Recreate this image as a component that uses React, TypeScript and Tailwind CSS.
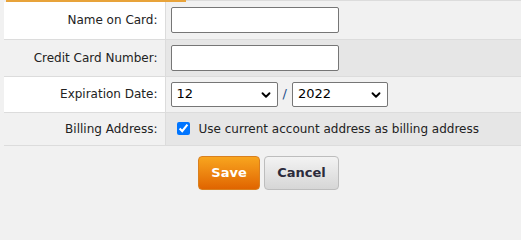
import { ChevronDown } from 'lucide-react';

const rows = [
  { label: 'Name on Card:', kind: 'text' },
  { label: 'Credit Card Number:', kind: 'text' },
  { label: 'Expiration Date:', kind: 'date' },
  { label: 'Billing Address:', kind: 'check' },
];

const Select = ({ value, width }: { value: string; width: string }) => (
  <div className={`relative ${width} h-[25px]`}>
    <select
      defaultValue={value}
      className="w-full h-full appearance-none bg-white border border-[#767676] rounded-[2px] pl-[5px] text-[13px] text-black outline-none"
    >
      <option>{value}</option>
    </select>
    <ChevronDown
      size={14}
      strokeWidth={3.2}
      className="absolute right-[5px] top-[6px] text-black pointer-events-none"
    />
  </div>
);

export default function App() {
  return (
    <div className="w-[521px] min-h-screen bg-[#f1f1f1] overflow-hidden font-['DejaVu_Sans',Verdana,sans-serif] text-[12px] text-[#222]">
      <div className="flex h-[2px]">
        <div className="w-[6px]" />
        <div className="w-[180px] bg-[#e8a33a]" />
        <div className="flex-1 border-t border-[#dcdcdc]" />
      </div>
      <table className="ml-[4px] w-[517px] border-collapse">
        <tbody>
          {rows.map((row, i) => {
            const odd = i % 2 === 1;
            return (
              <tr
                key={row.label}
                className={`border-b border-[#dcdcdc] ${row.kind === 'check' ? 'h-[33px]' : row.kind === 'date' ? 'h-[36px]' : 'h-[37px]'}`}
              >
                <td className={`w-[161px] pr-[7px] text-right align-middle border-r border-[#dcdcdc] ${odd ? 'bg-[#f1f1f1]' : 'bg-white'}`}>
                  {row.label}
                </td>
                <td className={`pl-[5px] align-middle ${odd ? 'bg-[#e6e6e6]' : 'bg-[#f1f1f1]'}`}>
                  {row.kind === 'text' && (
                    <input
                      type="text"
                      className="block w-[168px] h-[26px] bg-white border border-[#767676] rounded-[2px] outline-none"
                    />
                  )}
                  {row.kind === 'date' && (
                    <div className="flex items-center">
                      <Select value="12" width="w-[107px]" />
                      <span className="mx-[5px] text-[13px] text-[#1f4f8a]">/</span>
                      <Select value="2022" width="w-[96px]" />
                    </div>
                  )}
                  {row.kind === 'check' && (
                    <label className="flex items-center gap-[9px] pl-[6px]">
                      <input type="checkbox" defaultChecked className="w-[13px] h-[13px] m-0 accent-[#0075ff]" />
                      <span>Use current account address as billing address</span>
                    </label>
                  )}
                </td>
              </tr>
            );
          })}
        </tbody>
      </table>
      <div className="flex justify-center gap-[4px] pt-[10px] pl-[16px]">
        <button className="w-[62px] h-[34px] rounded-[4px] border border-[#d9801f] bg-gradient-to-b from-[#f8a51e] to-[#e06400] text-white font-bold text-[13px]">
          Save
        </button>
        <button className="w-[75px] h-[34px] rounded-[4px] border border-[#bdbdbd] bg-gradient-to-b from-[#f3f3f3] to-[#d6d6d6] text-[#2b2b3b] font-bold text-[13px]">
          Cancel
        </button>
      </div>
    </div>
  );
}
